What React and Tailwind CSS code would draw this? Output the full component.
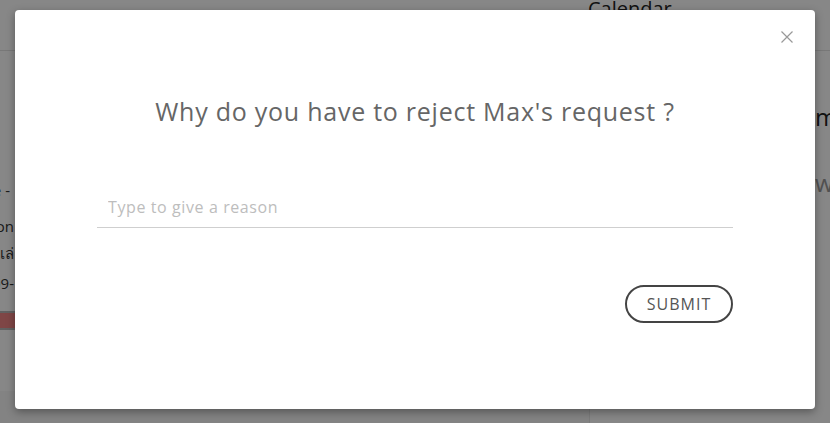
import { useState } from 'react';

const FONT = { fontFamily: '"Open Sans", "Noto Sans", sans-serif' };

function Backdrop() {
  // the page that sits behind the dialog
  return (
    <div className="h-[423px] w-[830px] bg-[#f7f7f7] text-[#333]">
      <header className="h-[51px] bg-white border-b border-[#e3e3e3] flex">
        <div className="w-[588px] shrink-0" />
        <div className="text-[20px] -mt-[6px] text-[#222]">Calendar</div>
      </header>
      <div className="flex h-[372px]">
        <div className="w-[589px] shrink-0">
          <div className="bg-white h-[340px] w-[560px] pt-[128px] text-[15px]">
            <div className="flex flex-col">
              <div className="w-[10px] flex justify-end whitespace-nowrap">Sick leave -</div>
              <div className="w-[14px] flex justify-end whitespace-nowrap mt-[13px]">Reason</div>
              <div className="w-[14px] flex justify-end whitespace-nowrap mt-[5px]">ลาเล่</div>
              <div className="w-[14px] flex justify-end whitespace-nowrap mt-[7px]">2021-09-</div>
            </div>
            <div className="mt-[17px] h-[19px] border-y-2 border-[#b8b8b8] bg-[#f08585]" />
          </div>
        </div>
        <div className="flex-1 min-w-0 overflow-hidden bg-white border-l border-[#e8e8e8] pl-[225px] pt-[48px]">
          <div className="text-[24px] text-[#222] whitespace-nowrap">meeting</div>
          <div className="text-[24px] text-[#999] mt-[30px] whitespace-nowrap">wait</div>
        </div>
      </div>
    </div>
  );
}

export default function App() {
  const [reason, setReason] = useState('');

  return (
    <div className="relative w-[830px] h-[423px] overflow-hidden" style={FONT}>
      <Backdrop />
      <div className="absolute inset-0 bg-black/[0.47]" />
      <div className="absolute left-[15px] top-[10px] w-[800px] h-[399px] bg-white rounded-[4px] shadow-[0_3px_8px_rgba(0,0,0,0.35)]">
        <button className="absolute left-[766px] top-[21px] text-[#999]">
          <svg width="12" height="12" viewBox="0 0 12 12" fill="none" stroke="currentColor" strokeWidth="1.2">
            <path d="M0.5 0.5 L11.5 11.5 M11.5 0.5 L0.5 11.5" />
          </svg>
        </button>
        <div className="flex flex-col items-center pt-[83px]">
          <h2 className="text-[25px] text-[#666] tracking-[0.75px] leading-[36px]">
            Why do you have to reject Max's request ?
          </h2>
          <div className="w-[636px] mt-[66px] border-b border-[#cfcfcf] pb-[8px] px-[11px]">
            <input
              value={reason}
              onChange={(e) => setReason(e.target.value)}
              placeholder="Type to give a reason"
              className="w-full outline-none text-[16px] tracking-[0.6px] text-[#555] placeholder:text-[#bdbdbd]"
            />
          </div>
          <div className="w-[636px] flex justify-end mt-[57px]">
            <button className="h-[38px] w-[108px] rounded-full border-2 border-[#444] text-[16px] tracking-[1px] text-[#555]">
              SUBMIT
            </button>
          </div>
        </div>
      </div>
    </div>
  );
}
